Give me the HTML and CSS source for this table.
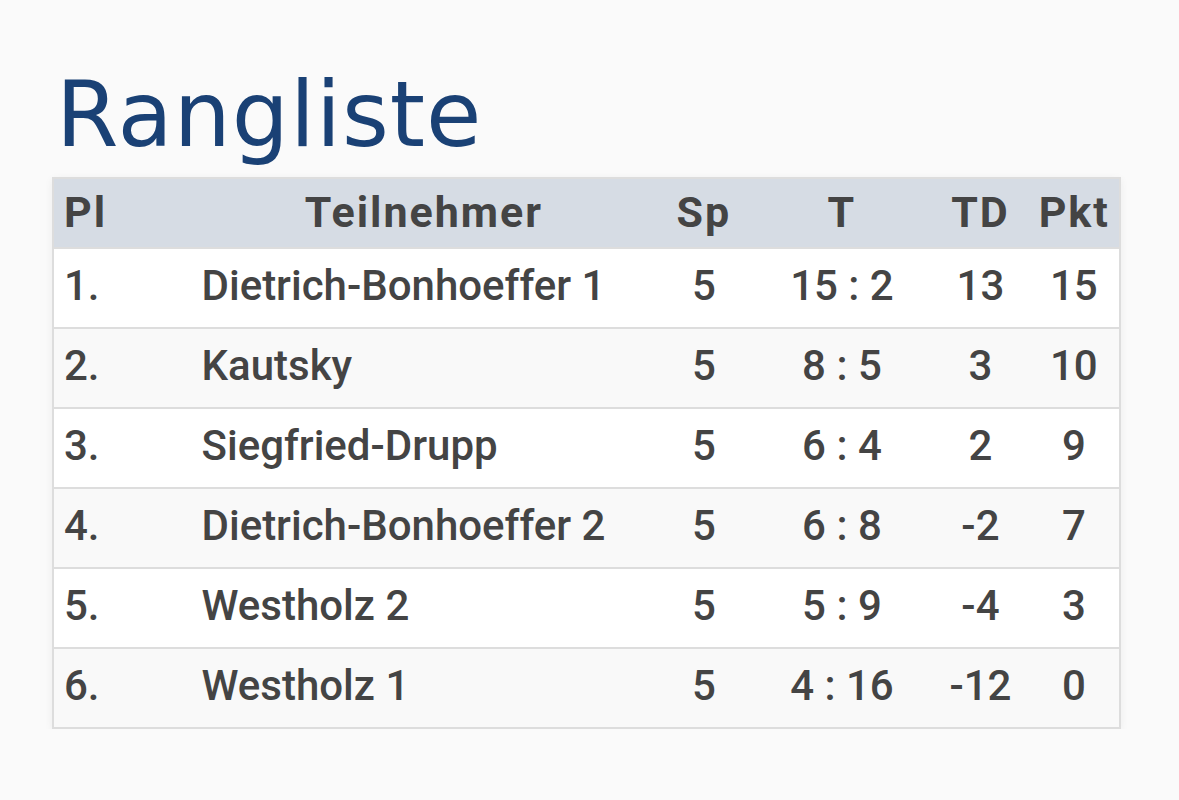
FILE: index.html
```html
<!DOCTYPE html>
<html lang="de">
<head>
<meta charset="utf-8">
<title>Rangliste</title>
<link rel="stylesheet" href="styles.css">
</head>
<body>
<main class="page">
  <h1 class="title">Rangliste</h1>
  <table class="standings">
    <colgroup>
      <col class="c-pl"><col class="c-name"><col class="c-sp"><col class="c-t"><col class="c-td"><col class="c-pkt">
    </colgroup>
    <thead>
      <tr><th class="left">Pl</th><th>Teilnehmer</th><th>Sp</th><th>T</th><th>TD</th><th>Pkt</th></tr>
    </thead>
    <tbody>
      <tr><td class="left">1.</td><td class="left">Dietrich-Bonhoeffer 1</td><td>5</td><td>15 : 2</td><td>13</td><td>15</td></tr>
      <tr><td class="left">2.</td><td class="left">Kautsky</td><td>5</td><td>8 : 5</td><td>3</td><td>10</td></tr>
      <tr><td class="left">3.</td><td class="left">Siegfried-Drupp</td><td>5</td><td>6 : 4</td><td>2</td><td>9</td></tr>
      <tr><td class="left">4.</td><td class="left">Dietrich-Bonhoeffer 2</td><td>5</td><td>6 : 8</td><td>-2</td><td>7</td></tr>
      <tr><td class="left">5.</td><td class="left">Westholz 2</td><td>5</td><td>5 : 9</td><td>-4</td><td>3</td></tr>
      <tr><td class="left">6.</td><td class="left">Westholz 1</td><td>5</td><td>4 : 16</td><td>-12</td><td>0</td></tr>
    </tbody>
  </table>
</main>
</body>
</html>
```
FILE: styles.css
```css
html, body {
  margin: 0;
  padding: 0;
  background: #fafafa;
}
.page {
  padding: 62px 58px 0 52px;
}
.title {
  margin: 0 0 10px 4px;
  font-family: "DejaVu Sans", "Open Sans", sans-serif;
  font-weight: 400;
  font-size: 90px;
  line-height: 105px;
  letter-spacing: 1px;
  color: #1a4175;
}
.standings {
  width: 1069px;
  border-collapse: collapse;
  table-layout: fixed;
  font-family: Roboto, "Liberation Sans", sans-serif;
  font-size: 42px;
  color: #444;
  border: 2px solid #dddddd;
  box-shadow: 0 2px 8px rgba(0,0,0,0.06);
}
.c-pl { width: 138px; }
.c-name { width: 463px; }
.c-sp { width: 95px; }
.c-t { width: 180px; }
.c-td { width: 96px; }
.c-pkt { width: 91px; }
.standings th {
  background: #d6dce4;
  font-weight: 700;
  font-size: 43px;
  letter-spacing: 2px;
  height: 66px;
  padding: 0 10px 2px;
  text-align: center;
}
.standings td {
  height: 72px;
  padding: 0 10px 6px;
  text-align: center;
  font-weight: 500;
  border-top: 2px solid #dddddd;
}
.standings .left { text-align: left; }
.standings tbody tr:nth-child(odd) td { background: #ffffff; }
.standings tbody tr:nth-child(even) td { background: #f9f9f9; }
```
